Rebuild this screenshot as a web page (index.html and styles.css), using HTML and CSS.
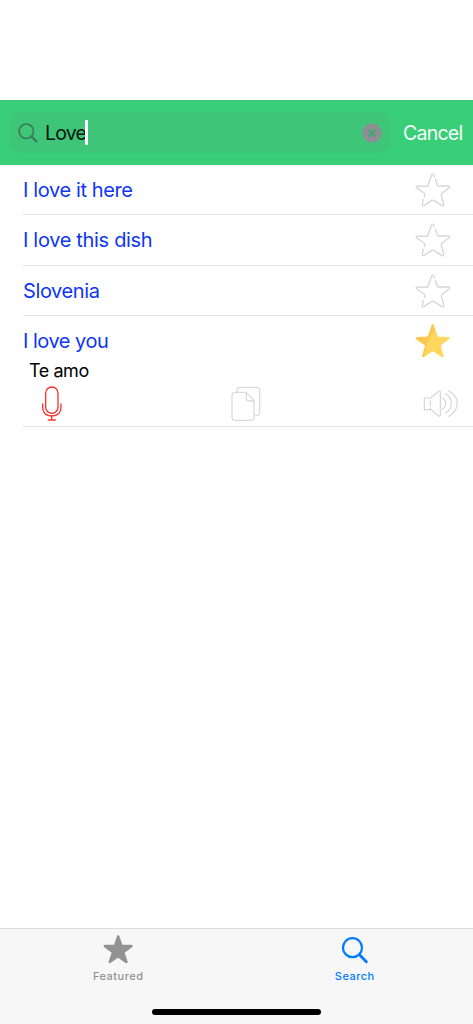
FILE: index.html
```html
<!DOCTYPE html>
<html lang="en">
<head>
<meta charset="utf-8">
<title>Search</title>
<link rel="stylesheet" href="styles.css">
</head>
<body>
<svg class="defs" width="0" height="0">
  <symbol id="star" viewBox="45 21 108 108">
    <path d="M106 43L112 60Q113 63 117 63L145 63Q152 65 147 69L127 84Q123 87 124 91L131 117Q132 125 125 121L103 107Q99 104 94 107L73 121Q67 124 67 117L70 103M73 95L75 90Q76 87 72 84L51 69Q45 64 52 63L79 64Q83 64 84 60L94 32Q98 23 102 32L103 35" fill="none" stroke="#d6d6d6" stroke-width="4" stroke-linecap="round"/>
  </symbol>
</svg>
<div class="app">
  <header class="bar">
    <div class="field">
      <svg class="glass" viewBox="0 0 20 20"><circle cx="8.3" cy="8.2" r="7.2" fill="none" stroke="#3a7a57" stroke-width="1.7"/><path d="M13.4 13.3L18.2 18.2" stroke="#3a7a57" stroke-width="2.2" stroke-linecap="round"/></svg>
      <span class="query">Love</span><span class="caret"></span>
      <svg class="clear" viewBox="0 0 20 20"><circle cx="10" cy="10" r="9.7" fill="#8c8f93"/><path d="M6.5 6.5L13.5 13.5M13.5 6.5L6.5 13.5" stroke="#3ea870" stroke-width="1.9"/></svg>
    </div>
    <span class="cancel">Cancel</span>
  </header>
  <main class="list">
    <section class="row"><span class="phrase p1">I love it here</span><svg class="star"><use href="#star"/></svg></section>
    <section class="row"><span class="phrase p2">I love this dish</span><svg class="star"><use href="#star"/></svg></section>
    <section class="row"><span class="phrase p3">Slovenia</span><svg class="star"><use href="#star"/></svg></section>
    <section class="row open">
      <div class="head"><span class="phrase p4">I love you</span>
        <svg class="star" viewBox="45 38 108 108"><path d="M95 45Q98 38 101 45L113 77Q114 79 117 79L146 80Q152 82 147 87L124 104Q122 106 123 109L131 136Q131 144 124 139L101 124Q98 123 95 125L74 139Q66 143 67 135L75 107Q75 105 73 103L49 87Q45 81 51 80L81 79Q84 79 85 75Z" fill="#ffd75e"/><path d="M95 45Q98 40 100 43L106 58Q83 82 79 109L71 141Q65 142 67 135L75 107Q75 105 73 103L49 87Q45 81 51 80L81 79Q84 79 85 75Z" fill="#fdc64f"/></svg>
      </div>
      <p class="translation">Te amo</p>
      <div class="tools">
        <svg class="mic" viewBox="123 228 63 108" fill="none" stroke="#f9332e" stroke-width="4" stroke-linecap="round"><rect x="137" y="231" width="37" height="79" rx="18.5"/><path d="M128 282V291Q128 318 155 318Q183 318 183 291V282M155 318V330M145 330H166"/></svg>
        <svg class="copy" viewBox="63 33 90 108" fill="none" stroke="#dadada" stroke-width="3.8" stroke-linejoin="round"><path d="M81 50V47Q81 37 91 37H139Q149 37 149 47V112Q149 122 139 122H135M109 52H76Q66 52 66 62V126Q66 136 76 136H122Q132 136 132 126V77L109 52V68Q109 78 119 78H132"/></svg>
        <svg class="sound" viewBox="69 238 108 87" fill="none" stroke="#d5d5d5" stroke-width="3.6" stroke-linecap="round" stroke-linejoin="round"><path d="M91 296V300H73V265H92L116 245Q121 242 121 248V315Q121 322 115 318L93 300M91 271V289M127 264Q137 270 137 281Q137 293 127 299M137 252Q154 262 154 281Q154 300 137 311M146 243Q172 258 172 281Q172 305 146 320"/></svg>
      </div>
    </section>
  </main>
  <nav class="tabs">
    <div class="tab">
      <svg class="tabicon" viewBox="99 42 90 90"><path d="M141 48Q144 42 148 48L157 74H185Q191 77 186 82L164 98L173 125Q173 131 167 129L144 113L121 129Q115 131 116 124L125 98L103 82Q98 77 104 74H132Z" fill="#929292"/></svg>
      <span class="label featured">Featured</span>
    </div>
    <div class="tab active">
      <svg class="tabicon" viewBox="119 42 90 90" fill="none" stroke="#007aff" stroke-linecap="round"><circle cx="156.500" cy="83" r="28.500" stroke-width="6.500"/><path d="M178 105L198 125" stroke-width="8.500"/></svg>
      <span class="label search">Search</span>
    </div>
    <div class="home"></div>
  </nav>
</div>
</body>
</html>
```
FILE: styles.css
```css
* { box-sizing: border-box; }
body { margin: 0; background: #fff; font-family: Inter, "Liberation Sans", sans-serif; }
.defs { position: absolute; }
.app { width: 473px; height: 1024px; padding-top: 100px; display: flex; flex-direction: column; overflow: hidden; }
.bar { height: 65px; flex: none; background: #39cf78; border-top: 1px solid #45bd78; padding: 11px 0 12px 9.5px; display: flex; align-items: center; }
.field { width: 380.5px; height: 41px; border-radius: 11px; background: #3fc578; display: flex; align-items: center; padding: 0 8px; }
.glass { width: 20px; height: 20px; }
.query { margin-left: 7.5px; width: 40px; font-size: 19.5px; line-height: 26px; letter-spacing: -0.8px; color: #06150c; white-space: nowrap; }
.caret { width: 2.5px; height: 25px; background: #fff; border-radius: 1px; }
.clear { width: 20px; height: 20px; margin-left: auto; }
.cancel { margin-left: 13px; font-size: 19.5px; line-height: 24px; letter-spacing: -0.75px; color: #f6fff9; }
.list { flex: 1; }
.row { height: 50.3px; margin-left: 23px; padding: 1px 22px 0 0; border-bottom: 1px solid #e3e3e3; display: flex; align-items: center; justify-content: space-between; }
.phrase { font-size: 20px; line-height: 26px; color: #0d36f5; white-space: nowrap; letter-spacing: -0.5px; }
.p1 { letter-spacing: -0.38px; }
.p2 { letter-spacing: -0.32px; }
.p3 { letter-spacing: -0.4px; }
.star { width: 36px; height: 36px; flex: none; }
.open { height: 111px; display: block; padding: 0; }
.head { height: 50px; padding-right: 22px; display: flex; align-items: center; justify-content: space-between; }
.translation { margin: -7px 0 0 6px; font-size: 18px; line-height: 24px; letter-spacing: -0.45px; color: #000; }
.tools { display: flex; align-items: center; height: 36px; margin-top: 3px; padding: 0 14px 0 18px; }
.mic { width: 21px; height: 36px; }
.copy { width: 30px; height: 36px; margin-left: 169px; }
.sound { width: 36px; height: 29px; margin-left: auto; }
.tabs { height: 96px; flex: none; background: #f7f7f7; border-top: 1px solid #dcdcdc; display: grid; grid-template-columns: 1fr 1fr; grid-template-rows: 80px 6px; }
.tab { display: flex; flex-direction: column; align-items: center; padding-top: 5px; color: #929292; }
.active { color: #007aff; }
.tabicon { width: 30px; height: 30px; }
.label { margin-top: 4px; font-size: 11px; line-height: 16px; font-weight: 500; letter-spacing: 0.5px; }
.home { grid-column: 1 / 3; justify-self: center; width: 169px; height: 6px; border-radius: 3px; background: #000; }
```
